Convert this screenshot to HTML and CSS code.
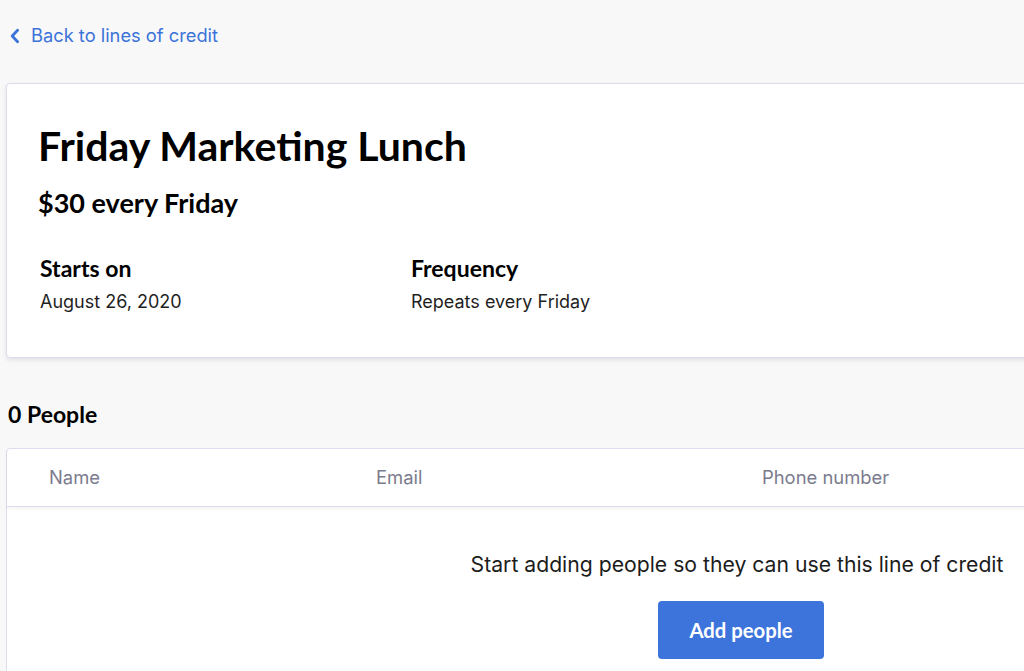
FILE: index.html
```html
<!DOCTYPE html>
<html>
<head>
<meta charset="utf-8">
<link rel="stylesheet" href="styles.css">
</head>
<body>
<div class="page">
  <a class="back" href="#">
    <svg class="chev" width="12" height="16" viewBox="0 0 12 16"><path d="M8.6 2.2 L3.2 8 L8.6 13.8" fill="none" stroke="#3b73d9" stroke-width="2.8" stroke-linecap="round" stroke-linejoin="round"/></svg>
    <span>Back to lines of credit</span>
  </a>
  <section class="card">
    <h1 class="title">Friday Marketing Lunch</h1>
    <h2 class="sub">$30 every Friday</h2>
    <div class="facts">
      <div class="fact">
        <div class="fact-label">Starts on</div>
        <div class="fact-value">August 26, 2020</div>
      </div>
      <div class="fact">
        <div class="fact-label">Frequency</div>
        <div class="fact-value">Repeats every Friday</div>
      </div>
    </div>
  </section>
  <h3 class="people">0 People</h3>
  <section class="table">
    <div class="thead">
      <div class="th th-name">Name</div>
      <div class="th th-email">Email</div>
      <div class="th th-phone">Phone number</div>
    </div>
    <div class="empty">
      <p class="empty-text">Start adding people so they can use this line of credit</p>
      <button class="btn">Add people</button>
    </div>
  </section>
</div>
</body>
</html>
```
FILE: styles.css
```css
html, body {
  margin: 0;
  padding: 0;
  background: #f8f8f8;
  overflow: hidden;
}
body {
  font-family: "Inter", "Liberation Sans", sans-serif;
  color: #1a1a1a;
}
.page {
  width: 1466px;
  padding: 0 0 0 6px;
}
.back {
  display: flex;
  align-items: center;
  gap: 10px;
  padding: 24px 0 0 3px;
  height: 22px;
  color: #3b73d9;
  text-decoration: none;
  font-size: 18.3px;
  line-height: 22px;
}
.chev { display: block; margin-top: 1px; }
.card {
  box-sizing: border-box;
  margin-top: 37px;
  height: 275px;
  background: #fff;
  border: 1px solid #dedcee;
  border-radius: 4px;
  box-shadow: 0 2px 4px rgba(60, 60, 90, 0.12);
  padding: 38px 31px 0;
}
.title {
  margin: 0;
  font-family: "Lato", sans-serif;
  font-weight: 700;
  font-size: 41px;
  line-height: 48px;
  color: #000;
}
.sub {
  margin: 17px 0 0;
  font-family: "Lato", sans-serif;
  font-weight: 700;
  font-size: 27px;
  line-height: 32px;
  color: #000;
}
.facts {
  display: flex;
  margin-top: 35px;
  padding-left: 2px;
}
.fact { width: 371px; }
.fact-label {
  font-family: "Lato", sans-serif;
  font-weight: 700;
  font-size: 23px;
  line-height: 28px;
  color: #000;
}
.fact-value {
  margin-top: 9px;
  font-size: 18px;
  line-height: 22px;
  color: #1f1f1f;
}
.people {
  margin: 42px 0 0 2px;
  font-family: "Lato", sans-serif;
  font-weight: 700;
  font-size: 23px;
  line-height: 28px;
  color: #000;
}
.table {
  margin-top: 20px;
  background: #fff;
  border: 1px solid #dedcee;
  border-radius: 4px;
  height: 260px;
}
.thead {
  box-sizing: border-box;
  display: flex;
  height: 58px;
  padding-bottom: 1px;
  align-items: center;
  border-bottom: 1px solid #dedcee;
  box-shadow: 0 2px 3px rgba(60, 60, 90, 0.06);
  font-size: 18.4px;
  line-height: 22px;
  color: #7b7b8e;
}
.th-name { margin-left: 42px; width: 327px; }
.th-email { width: 386px; }
.empty {
  display: flex;
  flex-direction: column;
  align-items: center;
}
.empty-text {
  margin: 44px 4px 0 0;
  font-size: 21.2px;
  line-height: 26px;
  color: #1c1c1c;
}
.btn {
  margin-top: 24px;
  margin-left: 4px;
  width: 166px;
  height: 58px;
  border: none;
  border-radius: 4px;
  background: #3d74dc;
  color: #fff;
  font-family: "Lato", sans-serif;
  font-weight: 700;
  font-size: 20.3px;
}
```
